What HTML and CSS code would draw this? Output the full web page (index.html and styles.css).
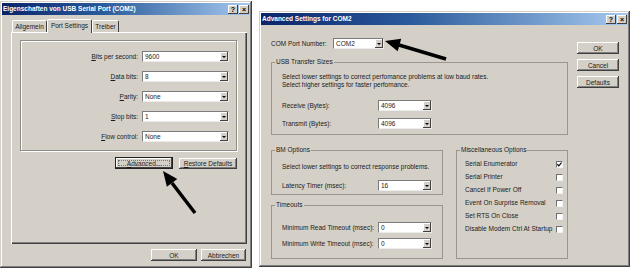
FILE: index.html
```html
<!DOCTYPE html>
<html>
<head>
<meta charset="utf-8">
<title>USB Serial Port</title>
<link rel="stylesheet" href="styles.css">
</head>
<body>
<div class="desk">
  <div class="win win-left">
    <div class="titlebar">
      <span class="title">Eigenschaften von USB Serial Port (COM2)</span>
      <span class="tbtns"><span class="tbtn">?</span><span class="tbtn">×</span></span>
    </div>
    <div class="lbody">
      <div class="tabs">
        <span class="tab t1">Allgemein</span>
        <span class="tab t2 sel">Port Settings</span>
        <span class="tab t3">Treiber</span>
      </div>
      <div class="panel">
        <div class="frame">
          <span class="flab"><u>B</u>its per second:</span>
          <div class="combo"><span class="cval">9600</span><i class="dd"></i></div>
          <span class="flab"><u>D</u>ata bits:</span>
          <div class="combo"><span class="cval">8</span><i class="dd"></i></div>
          <span class="flab"><u>P</u>arity:</span>
          <div class="combo"><span class="cval">None</span><i class="dd"></i></div>
          <span class="flab"><u>S</u>top bits:</span>
          <div class="combo"><span class="cval">1</span><i class="dd"></i></div>
          <span class="flab"><u>F</u>low control:</span>
          <div class="combo"><span class="cval">None</span><i class="dd"></i></div>
        </div>
        <div class="btnrow">
          <button class="btn b58 focus"><u>A</u>dvanced...</button>
          <button class="btn b58"><u>R</u>estore Defaults</button>
        </div>
      </div>
      <div class="btnrow bottom">
        <button class="btn b46">OK</button>
        <button class="btn b45">Abbrechen</button>
      </div>
    </div>
  </div>

  <div class="win win-right">
    <div class="titlebar">
      <span class="title">Advanced Settings for COM2</span>
      <span class="tbtns"><span class="tbtn">?</span><span class="tbtn">×</span></span>
    </div>
    <div class="rbody">
      <div class="rmain">
        <div class="comrow">
          <span class="comlab">COM Port Number:</span>
          <div class="combo c51"><span class="cval">COM2</span><i class="dd"></i></div>
        </div>
        <fieldset class="grp usb">
          <legend>USB Transfer Sizes</legend>
          <div class="gin usbin">
            <p>Select lower settings to correct perfomance problems at low baud rates.</p>
            <p>Select higher settings for faster perfomance.</p>
            <div class="srow first"><span>Receive (Bytes):</span><div class="combo c54"><span class="cval">4096</span><i class="dd"></i></div></div>
            <div class="srow second"><span>Transmit (Bytes):</span><div class="combo c54"><span class="cval">4096</span><i class="dd"></i></div></div>
          </div>
        </fieldset>
        <div class="lower">
          <div class="lcol">
            <fieldset class="grp bm">
              <legend>BM Options</legend>
              <div class="gin bmin">
                <p>Select lower settings to correct response problems.</p>
                <div class="srow lat"><span>Latency Timer (msec):</span><div class="combo c54"><span class="cval">16</span><i class="dd"></i></div></div>
              </div>
            </fieldset>
            <fieldset class="grp to">
              <legend>Timeouts</legend>
              <div class="gin toin">
                <div class="srow"><span>Minimum Read Timeout (msec):</span><div class="combo c54"><span class="cval">0</span><i class="dd"></i></div></div>
                <div class="srow second2"><span>Minimum Write Timeout (msec):</span><div class="combo c54"><span class="cval">0</span><i class="dd"></i></div></div>
              </div>
            </fieldset>
          </div>
          <fieldset class="grp misc">
            <legend>Miscellaneous Options</legend>
            <div class="miscin">
              <div class="opt"><span>Serial Enumerator</span><span class="chk"><svg width="5" height="5" viewBox="0 0 5 5"><polyline points="0.4,2.2 1.8,3.8 4.6,0.6" fill="none" stroke="#000" stroke-width="1.2"/></svg></span></div>
              <div class="opt"><span>Serial Printer</span><span class="chk"></span></div>
              <div class="opt"><span>Cancel If Power Off</span><span class="chk"></span></div>
              <div class="opt"><span>Event On Surprise Removal</span><span class="chk"></span></div>
              <div class="opt"><span>Set RTS On Close</span><span class="chk"></span></div>
              <div class="opt"><span>Disable Modem Ctrl At Startup</span><span class="chk"></span></div>
            </div>
          </fieldset>
        </div>
      </div>
      <div class="rbtns">
        <button class="btn b42">OK</button>
        <button class="btn b42">Cancel</button>
        <button class="btn b42">Defaults</button>
      </div>
    </div>
  </div>

  <svg class="arrows" width="632" height="273" viewBox="0 0 632 273">
    <line x1="195" y1="213" x2="172" y2="183" stroke="#000" stroke-width="3.5"/>
    <polygon points="163,171 177.3,178.9 166.9,186.8" fill="#000"/>
    <line x1="446" y1="59" x2="399" y2="45" stroke="#000" stroke-width="3.5"/>
    <polygon points="385,41 401.2,38.7 397.7,51.3" fill="#000"/>
  </svg>
</div>
</body>
</html>
```

FILE: styles.css
```css
* { box-sizing: border-box; margin: 0; padding: 0; }
html, body { background: #fff; }
body {
  margin: 0;
  width: 632px;
  height: 273px;
  overflow: hidden;
  font-family: "Liberation Sans", Arial, sans-serif;
  font-size: 6.5px;
  line-height: 8px;
  color: #1a1a1a;
}
.desk {
  position: relative;
  display: flex;
  align-items: flex-start;
  width: 632px;
  height: 273px;
}
.win {
  background: #d4d0c8;
  padding: 2px;
  display: flex;
  flex-direction: column;
  box-shadow: inset -1px -1px #404040, inset 1px 1px #d4d0c8, inset -2px -2px #808080, inset 2px 2px #fff;
}
.win-left { width: 252px; height: 267px; margin-top: 1px; }
.win-right { width: 371px; height: 256px; margin-top: 11px; margin-left: 7px; }

.titlebar {
  height: 12px;
  flex: none;
  display: flex;
  align-items: center;
  justify-content: space-between;
  padding: 0 1px 0 1px;
  background: linear-gradient(to right, #0a246a, #2a5a9a 40%, #a6caf0);
  color: #fff;
  font-weight: bold;
}
.title { white-space: nowrap; }
.tbtns { display: flex; gap: 1px; }
.tbtn {
  width: 10px;
  height: 9px;
  background: #d4d0c8;
  color: #000;
  font-size: 7px;
  line-height: 9px;
  text-align: center;
  font-weight: bold;
  box-shadow: inset -1px -1px #404040, inset 1px 1px #fff;
}

/* left dialog */
.lbody {
  display: flex;
  flex-direction: column;
  padding: 4px 3px 0 9px;
}
.tabs {
  display: flex;
  align-items: flex-end;
  height: 13px;
  padding-left: 1px;
  position: relative;
  z-index: 1;
}
.tab {
  height: 12px;
  line-height: 11px;
  text-align: center;
  border: 1px solid;
  border-color: #fff #404040 transparent #fff;
  border-bottom: none;
  border-radius: 2px 2px 0 0;
  background: #d4d0c8;
  white-space: nowrap;
}
.t1 { width: 35px; }
.t2 { width: 45px; }
.t3 { width: 27px; }
.tab.sel { height: 14px; margin-bottom: -1px; line-height: 12px; }
.panel {
  width: 236px;
  height: 212px;
  padding: 8px 10px 0 9px;
  box-shadow: inset 1px 1px #fff, inset -1px -1px #404040, inset -2px -2px #808080;
}
.frame {
  height: 111px;
  border: 1px solid #8f8b85;
  box-shadow: inset 1px 1px #fff, 1px 1px #fff;
  padding-top: 10px;
  display: grid;
  grid-template-columns: 117px 87px;
  grid-auto-rows: 11px;
  column-gap: 4px;
  row-gap: 9px;
}
.flab { justify-self: end; align-self: center; white-space: nowrap; }

.combo {
  display: flex;
  align-items: center;
  height: 11px;
  background: #fff;
  border: 1px solid;
  border-color: #7c7c7c #ececec #ececec #7c7c7c;
  padding-left: 2px;
}
.cval { flex: 1; line-height: 9px; white-space: nowrap; }
.dd {
  flex: none;
  width: 8px;
  height: 9px;
  background: #d4d0c8;
  box-shadow: inset -1px -1px #404040, inset 1px 1px #fff;
  display: flex;
  align-items: center;
  justify-content: center;
}
.dd::after {
  content: "";
  border-left: 2px solid transparent;
  border-right: 2px solid transparent;
  border-top: 2px solid #000;
}
.c51 { width: 51px; }
.c54 { width: 54px; }

.btnrow { display: flex; justify-content: flex-end; gap: 6px; margin-top: 7px; }
.btnrow.bottom { gap: 4px; margin-top: 5px; margin-right: 1px; }
.btn {
  height: 11px;
  background: #d4d0c8;
  border: none;
  font: inherit;
  color: #1a1a1a;
  line-height: 11px;
  text-align: center;
  white-space: nowrap;
  box-shadow: inset -1px -1px #404040, inset 1px 1px #fff, inset -2px -2px #808080;
  display: flex;
  align-items: center;
  justify-content: center;
}
.b58 { width: 58px; }
.b46 { width: 46px; height: 12px; }
.b45 { width: 45px; height: 12px; }
.b42 { width: 42px; height: 12px; }
.btn.focus {
  height: 12px;
  margin-top: -1px;
  box-shadow: inset 0 0 0 1px #222, inset -2px -2px #404040, inset 2px 2px #fff;
  outline: 1px dotted #777;
  outline-offset: -4px;
}

/* right dialog */
.rbody {
  display: flex;
  gap: 9px;
  padding: 13px 0 0 10px;
}
.rmain { width: 297px; display: flex; flex-direction: column; }
.comrow { display: flex; align-items: center; height: 11px; }
.comlab { width: 62px; white-space: nowrap; }

.grp {
  margin: 0;
  padding: 0;
  min-width: 0;
  border: 1px solid #9a968f;
}
.grp legend {
  margin-left: 3px;
  padding: 0 1px;
  line-height: 8px;
  white-space: nowrap;
}
.usb { margin-top: 9px; }
.gin { padding-left: 10px; }
.usbin { padding-top: 7px; padding-bottom: 5px; }
.gin p { white-space: nowrap; }
.srow {
  display: grid;
  grid-template-columns: 96px 54px;
  align-items: center;
  height: 11px;
}
.srow span { white-space: nowrap; }
.srow.first { margin-top: 11px; }
.srow.second { margin-top: 7px; }
.lower { display: flex; gap: 13px; margin-top: 11px; align-items: stretch; }
.lcol { width: 172px; display: flex; flex-direction: column; }
.bmin { padding-top: 9px; padding-bottom: 3px; }
.srow.lat { margin-top: 9px; }
.to { margin-top: 6px; }
.toin { padding-top: 13px; padding-bottom: 9px; }
.srow.second2 { margin-top: 5px; }
.misc { width: 112px; }
.miscin {
  padding: 6px 4px 0 8px;
  display: flex;
  flex-direction: column;
  gap: 5px;
}
.opt {
  display: flex;
  justify-content: space-between;
  align-items: center;
  height: 8px;
  white-space: nowrap;
}
.chk {
  width: 7px;
  height: 7px;
  background: #fff;
  border: 1px solid;
  border-color: #707070 #f2f2f2 #f2f2f2 #707070;
  display: flex;
  align-items: center;
  justify-content: center;
}
.chk svg { display: block; }
.rbtns {
  width: 42px;
  display: flex;
  flex-direction: column;
  gap: 5px;
  margin-top: 4px;
}

.arrows {
  position: absolute;
  left: 0;
  top: 0;
  pointer-events: none;
}
```
